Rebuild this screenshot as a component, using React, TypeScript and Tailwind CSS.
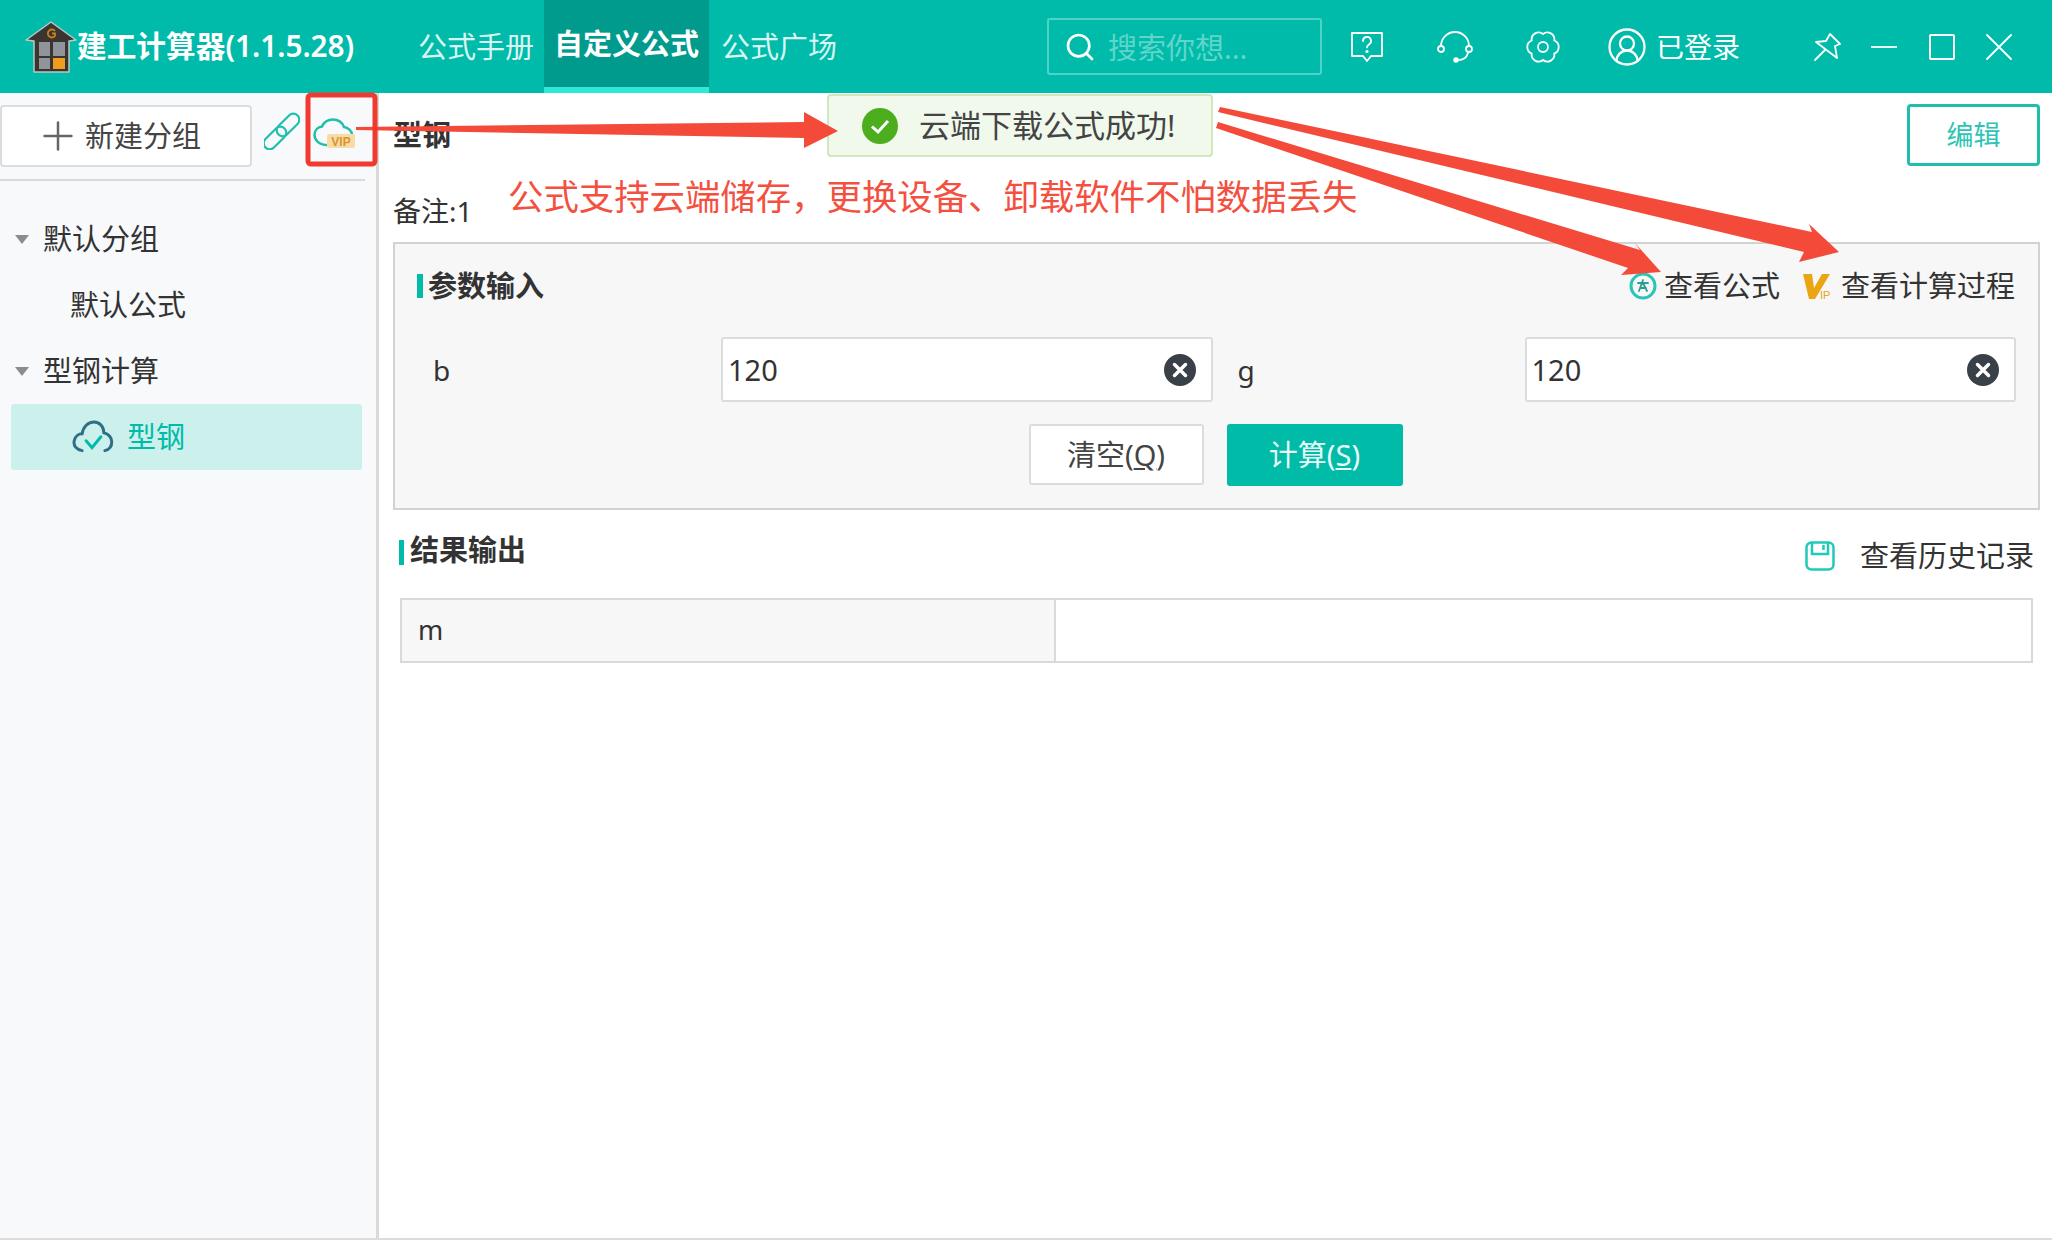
import { CircleUserRound, Plus, Search } from "lucide-react";

const font = "font-['Noto_Sans','Noto_Sans_CJK_SC',sans-serif]";

function Logo() {
  return (
    <svg width="52" height="52" viewBox="0 0 52 52" className="shrink-0">
      <path d="M26 1 L51 19 L44 20 L44 51 L9 51 L9 20 L1 19 Z" fill="#3b3532" stroke="#b9c9c4" strokeWidth="1.500" strokeLinejoin="round" />
      <rect x="14" y="21" width="11" height="14" fill="#8f959b" />
      <rect x="28" y="21" width="12" height="14" fill="#8f959b" />
      <rect x="14" y="37" width="11" height="11" fill="#8f959b" />
      <rect x="28" y="37" width="12" height="11" fill="#f29c1f" />
      <path d="M30 10 A4 4 0 1 0 30 15 V12.500 H27" fill="none" stroke="#c97f1a" strokeWidth="1.800" />
    </svg>
  );
}

function HelpIcon() {
  return (
    <svg width="32" height="30" viewBox="0 0 32 30" fill="none" stroke="white" strokeWidth="1.800">
      <path d="M1 1 H31 V24 H20 L16 29 L12 24 H1 Z" strokeLinejoin="round" />
      <path d="M12 9 a4 4 0 1 1 6 3.400 c-1.400 .9 -2 1.600 -2 3" strokeLinecap="round" />
      <circle cx="16" cy="19.500" r="0.700" fill="white" />
    </svg>
  );
}

function HeadsetIcon() {
  return (
    <svg width="36" height="32" viewBox="0 0 36 32" fill="none" stroke="white" strokeWidth="1.800" strokeLinecap="round" className="shrink-0">
      <path d="M4 15 A14 14 0 0 1 32 15" />
      <circle cx="4" cy="18" r="3" />
      <circle cx="32" cy="18" r="3" />
      <path d="M31 22 Q29 29 21 29" />
      <circle cx="19" cy="29" r="1.800" fill="white" />
    </svg>
  );
}

function GearIcon() {
  return (
    <svg width="34" height="34" viewBox="0 0 34 34" fill="none" stroke="white" strokeWidth="1.800" className="shrink-0">
      <path d="M17 4 A7 7 0 0 1 28.300 10.500 A7 7 0 0 1 28.300 23.500 A7 7 0 0 1 17 30 A7 7 0 0 1 5.700 23.500 A7 7 0 0 1 5.700 10.500 A7 7 0 0 1 17 4 Z" />
      <circle cx="17" cy="17" r="5" />
    </svg>
  );
}

function PinIcon() {
  return (
    <svg width="28" height="30" viewBox="0 0 28 30" fill="none" stroke="white" strokeWidth="1.800" strokeLinecap="round" strokeLinejoin="round" className="shrink-0">
      <path d="M17 2 L27 12 L22 14 L24 26 L3 10 L13 9 Z" />
      <path d="M2 28 L12 18" />
    </svg>
  );
}

function CloseIcon() {
  return (
    <svg width="26" height="26" viewBox="0 0 26 26" stroke="white" strokeWidth="1.800" strokeLinecap="round" className="shrink-0">
      <path d="M1 1 L25 25 M25 1 L1 25" />
    </svg>
  );
}

function LinkIcon() {
  return (
    <svg width="36" height="38" viewBox="0 0 36 38" fill="none" stroke="#1fbfae" strokeWidth="2.200" className="shrink-0">
      <rect x="-13.500" y="-6" width="27" height="12" rx="6" transform="translate(11 26) rotate(-45)" />
      <rect x="-13.500" y="-6" width="27" height="12" rx="6" transform="translate(24 13) rotate(-45)" />
    </svg>
  );
}

function CloudCheck({ size = 42 }: { size?: number }) {
  return (
    <svg width={size} height={size * 0.8} viewBox="0 0 42 34" fill="none" strokeWidth="3" strokeLinecap="round">
      <path d="M10 31 C4 30 1 26 2 21 C3 16 7 14 10 14 C11 7 16 2 22 2 C28 2 32 7 32 13 C37 14 40 18 40 22 C40 27 37 30 33 31" stroke="#2f6f86" />
      <path d="M14 21 L20 28 L29 17" stroke="#00bba8" />
    </svg>
  );
}

function CloudVip() {
  return (
    <svg width="42" height="31" viewBox="0 0 42 31" fill="none" className="shrink-0">
      <path d="M14 27 C6 27 1.500 22 1.500 17 C1.500 12 5 9 9 8.500 C11 4 15 1.500 20 1.500 C25 1.500 29 4 31 9 C35 9.500 39 13 39 17" stroke="#1fbfae" strokeWidth="2.500" strokeLinecap="round" />
      <rect x="14" y="16" width="28" height="14" rx="2" fill="#f8dca8" />
      <text x="28" y="27.500" textAnchor="middle" fontSize="12" fontWeight="700" fill="#d9952a" fontFamily="Liberation Sans, sans-serif">VIP</text>
    </svg>
  );
}

function ClearIcon() {
  return (
    <svg width="32" height="32" viewBox="0 0 32 32" className="shrink-0">
      <circle cx="16" cy="16" r="16" fill="#3a4048" />
      <path d="M10.500 10.500 L21.500 21.500 M21.500 10.500 L10.500 21.500" stroke="white" strokeWidth="3.500" strokeLinecap="round" />
    </svg>
  );
}

function FormulaIcon() {
  return (
    <svg width="28" height="28" viewBox="0 0 28 28" fill="none" className="shrink-0">
      <circle cx="14" cy="14" r="12" stroke="#2cc4b4" strokeWidth="3" />
      <path d="M9 11 H19 M14 8 L10 19 M14 11 L18 19 M11 16 H17" stroke="#2a9d92" strokeWidth="1.800" strokeLinecap="round" />
    </svg>
  );
}

function VipIcon() {
  return (
    <svg width="30" height="27" viewBox="0 0 30 27" className="shrink-0">
      <path d="M0 1 H9 L11 15 L19 1 H27 L12 26 H6 Z" fill="#eaa514" />
      <text x="17" y="26" fontSize="11" fill="#eaa514" fontFamily="Liberation Sans, sans-serif">IP</text>
    </svg>
  );
}

function SaveIcon() {
  return (
    <svg width="30" height="30" viewBox="0 0 30 30" fill="none" stroke="#1fcab8" strokeWidth="2.500" className="shrink-0">
      <rect x="1.500" y="1.500" width="27" height="27" rx="5" />
      <path d="M7 2 V13 H23 V2" />
      <path d="M18.500 4 V9" />
    </svg>
  );
}

function Caret() {
  return <div className="w-0 h-0 border-x-[7px] border-x-transparent border-t-[9px] border-t-[#8c8c8c]" />;
}

function ParamInput({ value }: { value: string }) {
  return (
    <div className="flex h-[65px] flex-1 items-center justify-between rounded-[3px] border-2 border-[#dcdcdc] bg-white pl-[5px] pr-[15px] text-[29px] text-[#333]">
      <span>{value}</span>
      <ClearIcon />
    </div>
  );
}

function Arrows() {
  return (
    <svg width="2052" height="300" className="pointer-events-none absolute left-0 top-0" fill="#f44a3a">
      <polygon points="356,127 804,122 804,112 838,131 804,148 804,138 356,130" />
      <polygon points="1220,107 1812,232 1809,224 1839,252 1799,262 1804,252 1218,112" />
      <polygon points="1218,122 1640,250 1634,242 1661,272 1621,275 1628,268 1216,128" />
      <rect x="308" y="95" width="67" height="69" rx="3" fill="none" stroke="#f0392f" strokeWidth="5" />
    </svg>
  );
}

export default function App() {
  return (
    <div className={`relative flex h-[1240px] w-[2052px] flex-col overflow-hidden bg-white text-[#333] ${font}`}>
      <header className="flex h-[93px] shrink-0 items-center bg-[#00bbaa] text-white">
        <div className="ml-[25px] flex w-[393px] shrink-0 items-center">
          <Logo />
          <span className="text-[29.700px] font-semibold whitespace-nowrap">建工计算器(1.1.5.28)</span>
        </div>
        <nav className="flex h-full items-center text-[29px]">
          <span className="w-[126px] whitespace-nowrap text-[#d8f5f1]">公式手册</span>
          <span className="flex h-full w-[165px] items-center justify-center border-b-[6px] border-[#2ee8d8] bg-[#009b8c] font-semibold whitespace-nowrap">自定义公式</span>
          <span className="ml-[12px] whitespace-nowrap text-[#d8f5f1]">公式广场</span>
        </nav>
        <div className="ml-[210px] flex h-[57px] w-[275px] items-center gap-[12px] rounded-[3px] border-2 border-[#4fd3c6] pl-[15px] text-[29px] text-[#5fd6ca]">
          <Search className="h-[32px] w-[32px] text-white" strokeWidth={2} />
          <span className="mt-[3px] whitespace-nowrap">搜索你想...</span>
        </div>
        <div className="ml-[29px] flex w-[32px] justify-center"><HelpIcon /></div>
        <div className="ml-[54px]"><HeadsetIcon /></div>
        <div className="ml-[53px]"><GearIcon /></div>
        <CircleUserRound className="ml-[46px] h-[42px] w-[42px]" strokeWidth={1.300} />
        <span className="ml-[8px] text-[28px] whitespace-nowrap">已登录</span>
        <div className="ml-[73px]"><PinIcon /></div>
        <div className="ml-[30px] h-[2px] w-[26px] bg-white/90" />
        <div className="ml-[32px] h-[26px] w-[26px] rounded-[2px] border-2 border-white" />
        <div className="ml-[31px]"><CloseIcon /></div>
      </header>

      <div className="flex min-h-0 flex-1 border-b-2 border-[#dcdcdc]">
        <aside className="flex w-[379px] shrink-0 flex-col border-r-[3px] border-[#d9d9d9] bg-[#f8f9fb]">
          <div className="mr-[11px] flex h-[88px] items-start border-b-2 border-[#d9d9d9] pt-[12px]">
            <button className="flex h-[62px] w-[252px] items-center gap-[4px] rounded-[4px] border-2 border-[#dcdcdc] bg-white pl-[33px] text-[29px] text-[#444]">
              <Plus className="h-[46px] w-[46px] shrink-0 text-[#666]" strokeWidth={1.300} />
              新建分组
            </button>
            <div className="ml-[12px] mt-[7px]"><LinkIcon /></div>
            <div className="ml-[13px] mt-[13px]"><CloudVip /></div>
          </div>
          <ul className="pt-[25px] text-[29px] text-[#333]">
            <li className="flex h-[66px] items-center gap-[14px] pl-[15px]"><Caret />默认分组</li>
            <li className="flex h-[66px] items-center pl-[70px]">默认公式</li>
            <li className="flex h-[66px] items-center gap-[14px] pl-[15px]"><Caret />型钢计算</li>
            <li className="ml-[11px] mr-[14px] flex h-[66px] items-center gap-[13px] rounded-[3px] bg-[#ccf1ed] pl-[61px] text-[#00bba8]">
              <CloudCheck />
              型钢
            </li>
          </ul>
        </aside>

        <main className="flex min-w-0 flex-1 flex-col pl-[14px] pr-[12px]">
          <div className="flex items-start justify-between pt-[11px]">
            <h1 className="mt-[11px] text-[29px] leading-[40px] font-semibold">型钢</h1>
            <button className="h-[62px] w-[133px] rounded-[4px] border-[3px] border-[#1fbfae] bg-white text-[27px] text-[#2cc4b4]">编辑</button>
          </div>
          <div className="mt-[8px] flex h-[68px] items-start">
            <span className="mt-[17px] w-[115px] shrink-0 text-[28px] leading-[40px]">备注:1</span>
            <span className="-mt-[3px] text-[35.400px] leading-[50px] text-[#f4503f] whitespace-nowrap">公式支持云端储存，更换设备、卸载软件不怕数据丢失</span>
          </div>

          <section className="h-[268px] border-2 border-[#d2d2d2] bg-[#f7f7f7] px-[22px] pt-[22px]">
            <div className="flex h-[40px] items-center">
              <div className="h-[24px] w-[6px] bg-[#00bba8]" />
              <h2 className="ml-[5px] text-[29px] font-semibold">参数输入</h2>
              <div className="ml-auto flex items-center pr-[1px] text-[29px]">
                <FormulaIcon />
                <span className="ml-[7px]">查看公式</span>
                <div className="ml-[23px]"><VipIcon /></div>
                <span className="ml-[8px] whitespace-nowrap">查看计算过程</span>
              </div>
            </div>
            <div className="mt-[31px] flex items-center text-[28px]">
              <span className="ml-[16px] w-[288px] shrink-0">b</span>
              <ParamInput value="120" />
              <span className="ml-[25px] w-[287px] shrink-0">g</span>
              <ParamInput value="120" />
            </div>
            <div className="mt-[22px] flex justify-center gap-[23px] pr-[2px] text-[29px]">
              <button className="h-[61px] w-[175px] rounded-[3px] border-2 border-[#dcdcdc] bg-white text-[#444]">清空(<u>Q</u>)</button>
              <button className="h-[62px] w-[176px] rounded-[3px] bg-[#00bba8] text-[#e6faf7]">计算(<u>S</u>)</button>
            </div>
          </section>

          <div className="flex h-[88px] items-center pl-[6px] pr-[6px]">
            <div className="mb-[4px] h-[25px] w-[5px] bg-[#00bba8]" />
            <h2 className="mb-[8px] ml-[6px] text-[29px] font-semibold">结果输出</h2>
            <div className="ml-auto mt-[4px] flex items-center text-[29px]">
              <SaveIcon />
              <span className="ml-[25px] whitespace-nowrap">查看历史记录</span>
            </div>
          </div>
          <div className="ml-[7px] mr-[7px] flex h-[65px] border-2 border-[#d9d9d9] text-[27px]">
            <div className="flex w-[654px] shrink-0 items-center border-r-2 border-[#d9d9d9] bg-[#f7f7f7] pl-[16px]">m</div>
            <div className="flex-1 bg-white" />
          </div>
        </main>
      </div>

      <div className="absolute left-[827px] top-[94px] flex h-[63px] w-[386px] items-center rounded-[4px] border-2 border-[#cfe8bd] bg-[#f0f9eb] pl-[33px] text-[31px] text-[#444]">
        <svg width="36" height="36" viewBox="0 0 36 36" className="shrink-0">
          <circle cx="18" cy="18" r="18" fill="#4cae1e" />
          <path d="M10 18.500 L16 24 L26 13" stroke="white" strokeWidth="3" fill="none" />
        </svg>
        <span className="ml-[21px] whitespace-nowrap">云端下载公式成功!</span>
      </div>
      <Arrows />
    </div>
  );
}
